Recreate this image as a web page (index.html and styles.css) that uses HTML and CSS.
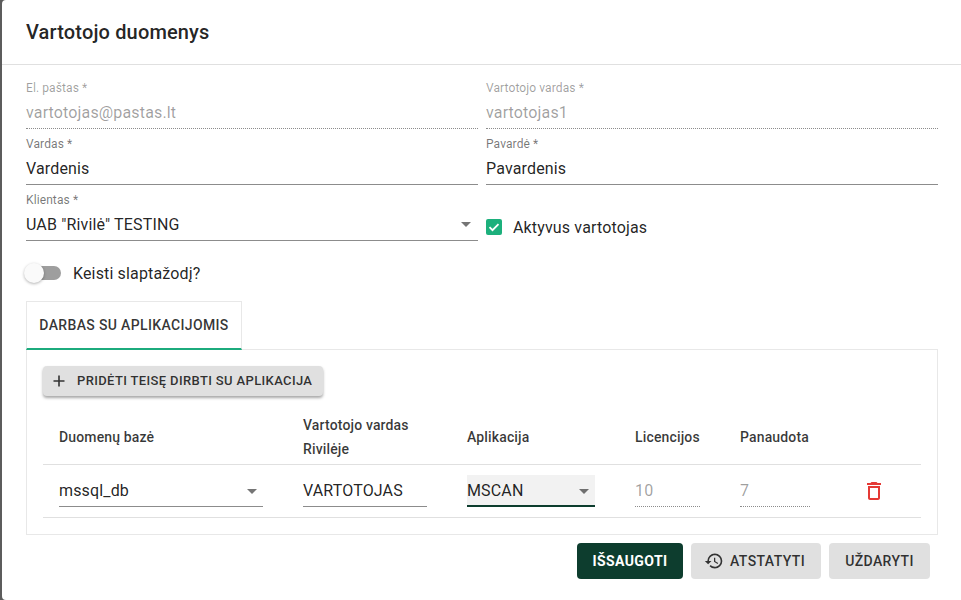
FILE: index.html
```html
<!DOCTYPE html>
<html lang="lt">
<head>
<meta charset="utf-8">
<title>Vartotojo duomenys</title>
<link rel="stylesheet" href="styles.css">
</head>
<body>
<div class="dialog">
  <header class="dialog-head"><h1>Vartotojo duomenys</h1></header>
  <div class="dialog-body">
    <div class="form-grid">
      <div class="field disabled"><label>El. paštas *</label><div class="value">vartotojas@pastas.lt</div></div>
      <div class="field disabled"><label>Vartotojo vardas *</label><div class="value">vartotojas1</div></div>
      <div class="field"><label>Vardas *</label><div class="value">Vardenis</div></div>
      <div class="field"><label>Pavardė *</label><div class="value">Pavardenis</div></div>
      <div class="field select"><label>Klientas *</label><div class="value">UAB "Rivilė" TESTING<span class="caret"></span></div></div>
      <div class="check-row">
        <svg class="checkbox" width="16" height="16" viewBox="0 0 16 16"><rect width="16" height="16" rx="2" fill="#1cb07c"/><path d="M3.500 8.200l3 3 6-6" fill="none" stroke="#fff" stroke-width="1.800"/></svg>
        <span>Aktyvus vartotojas</span>
      </div>
    </div>
    <div class="switch-row">
      <span class="switch"><span class="knob"></span></span>
      <span>Keisti slaptažodį?</span>
    </div>
    <div class="tabs"><div class="tab">DARBAS SU APLIKACIJOMIS</div></div>
    <section class="tab-panel">
      <button class="btn raised"><svg width="14" height="14" viewBox="0 0 14 14"><path d="M7 1.500v11M1.500 7h11" stroke="#333" stroke-width="1.600" fill="none"/></svg><span>PRIDĖTI TEISĘ DIRBTI SU APLIKACIJA</span></button>
      <div class="table">
        <div class="row head">
          <div class="c1">Duomenų bazė</div>
          <div class="c2">Vartotojo vardas Rivilėje</div>
          <div class="c3">Aplikacija</div>
          <div class="c4">Licencijos</div>
          <div class="c5">Panaudota</div>
          <div class="c6"></div>
        </div>
        <div class="row body">
          <div class="c1"><div class="cell-input">mssql_db<span class="caret"></span></div></div>
          <div class="c2"><div class="cell-input">VARTOTOJAS</div></div>
          <div class="c3"><div class="cell-input focus">MSCAN<span class="caret"></span></div></div>
          <div class="c4"><div class="cell-input off">10</div></div>
          <div class="c5"><div class="cell-input off">7</div></div>
          <div class="c6">
            <svg class="trash" width="24" height="24" viewBox="0 0 24 24"><path fill="#e53935" d="M15.500 4l-1-1h-5l-1 1H5v2h14V4h-3.500zM6 19c0 1.100.9 2 2 2h8c1.100 0 2-.9 2-2V7H6v12zm2-10h8v10H8V9z"/></svg>
          </div>
        </div>
      </div>
    </section>
  </div>
  <footer class="actions">
    <button class="btn primary">IŠSAUGOTI</button>
    <button class="btn flat"><svg width="20" height="20" viewBox="0 0 24 24"><path fill="#333" d="M13 3a9 9 0 0 0-9 9H1l3.890 3.890.07.140L9 12H6c0-3.870 3.130-7 7-7s7 3.130 7 7-3.130 7-7 7c-1.930 0-3.680-.79-4.940-2.060l-1.420 1.420A8.954 8.954 0 0 0 13 21a9 9 0 0 0 0-18zm-1 5v5l4.280 2.540.72-1.210-3.500-2.080V8H12z"/></svg><span>ATSTATYTI</span></button>
    <button class="btn flat">UŽDARYTI</button>
  </footer>
</div>
</body>
</html>
```

FILE: styles.css
```css
* { box-sizing: border-box; }
html, body { margin: 0; height: 100%; }
body {
  background: #5c5c5c;
  font-family: Roboto, "Liberation Sans", sans-serif;
  color: rgba(0, 0, 0, .87);
  overflow: hidden;
  padding-left: 2px;
}
.dialog {
  background: #fff;
  height: 600px;
  width: 959px;
  border-radius: 4px 0 0 4px;
  display: flex;
  flex-direction: column;
}
.dialog-head {
  height: 65px;
  padding: 0 24px;
  border-bottom: 1px solid #e0e0e0;
  display: flex;
  align-items: center;
}
.dialog-head h1 {
  margin: 0 0 1px;
  font-size: 20px;
  font-weight: 500;
  letter-spacing: .15px;
}
.dialog-body { padding: 15px 23px 0 24px; }
.form-grid {
  display: grid;
  grid-template-columns: 452px 452px;
  column-gap: 8px;
  grid-auto-rows: 56px;
}
.field {
  display: flex;
  flex-direction: column;
  height: 49px;
  border-bottom: 1px solid #8c8c8c;
}
.field label {
  font-size: 12px;
  line-height: 16px;
  letter-spacing: .1px;
  color: rgba(0, 0, 0, .54);
}
.field .value {
  position: relative;
  font-size: 16px;
  line-height: 24px;
  margin-top: 5px;
  letter-spacing: .15px;
}
.field.disabled { border-bottom: 1px dotted #8c8c8c; }
.field.disabled label { color: rgba(0, 0, 0, .38); }
.field.disabled .value { color: rgba(0, 0, 0, .38); }
.caret {
  position: absolute;
  right: 7px;
  top: 9px;
  width: 0;
  height: 0;
  border-left: 5px solid transparent;
  border-right: 5px solid transparent;
  border-top: 5px solid rgba(0, 0, 0, .54);
}
.check-row {
  display: flex;
  align-items: center;
  gap: 11px;
  height: 20px;
  margin-top: 25px;
  font-size: 16px;
  letter-spacing: .15px;
}
.switch-row {
  display: flex;
  align-items: center;
  gap: 12px;
  margin-top: 13px;
  height: 24px;
  font-size: 16px;
  letter-spacing: .15px;
}
.switch {
  position: relative;
  width: 35px;
  height: 14px;
  border-radius: 7px;
  background: #9e9e9e;
}
.knob {
  position: absolute;
  left: -2px;
  top: -3px;
  width: 20px;
  height: 20px;
  border-radius: 50%;
  background: #fafafa;
  box-shadow: 0 1px 3px rgba(0, 0, 0, .3);
}
.tabs {
  margin-top: 16px;
  height: 49px;
  border-bottom: 1px solid #e8e8e8;
}
.tab {
  width: 216px;
  height: 49px;
  border: 1px solid #e8e8e8;
  border-bottom: 2px solid #1cab7d;
  font-size: 14px;
  font-weight: 500;
  letter-spacing: .35px;
  color: rgba(0, 0, 0, .8);
  display: flex;
  align-items: center;
  justify-content: center;
}
.tab-panel {
  height: 185px;
  padding: 16px 16px 0;
  border: 1px solid #e8e8e8;
  border-top: 0;
}
.btn {
  border: 0;
  border-radius: 4px;
  font-family: inherit;
  font-weight: 500;
  display: inline-flex;
  align-items: center;
  justify-content: center;
}
.raised {
  height: 30px;
  width: 280px;
  padding: 0 0 1px 9px;
  justify-content: flex-start;
  background: #e0e0e0;
  font-size: 13px;
  letter-spacing: .36px;
  color: rgba(0, 0, 0, .8);
  gap: 11px;
  box-shadow: 0 2px 3px rgba(0, 0, 0, .35);
}
.table { margin-top: 14px; }
.row {
  display: flex;
  width: 878px;
  border-bottom: 1px solid #e0e0e0;
  font-size: 14px;
  letter-spacing: .15px;
}
.row.head {
  height: 55px;
  font-weight: 500;
  line-height: 24px;
  align-items: center;
  color: rgba(0, 0, 0, .78);
}
.row.body { height: 53px; align-items: flex-start; padding-top: 10px; }
.c1 { width: 260px; padding-left: 16px; }
.c2 { width: 164px; padding-right: 40px; }
.c3 { width: 168px; padding-right: 40px; }
.c4 { width: 105px; padding-right: 40px; }
.c5 { width: 110px; padding-right: 40px; }
.c6 { flex: 1; display: flex; justify-content: flex-start; padding: 4px 0 0 12px; }
.row.body .c1 { padding-right: 40px; }
.cell-input {
  position: relative;
  height: 32px;
  line-height: 31px;
  font-size: 16px;
  letter-spacing: .15px;
  border-bottom: 1px solid #8c8c8c;
}
.cell-input .caret { top: 14px; right: 6px; }
.cell-input.focus {
  background: #f2f2f2;
  border-bottom: 2px solid #0d3d2e;
}
.cell-input.off {
  color: rgba(0, 0, 0, .38);
  border-bottom: 1px dotted #8c8c8c;
}
.actions {
  display: flex;
  justify-content: flex-end;
  gap: 8px;
  padding: 8px 29px 0 0;
  margin-right: 2px;
}
.actions .btn {
  height: 36px;
  font-size: 14px;
  letter-spacing: .4px;
}
.primary { width: 106px; background: #0d3d2e; color: #fff; font-weight: 700; }
.flat { background: #e0e0e0; color: rgba(0, 0, 0, .8); }
.actions .flat:nth-child(2) { width: 130px; gap: 6px; justify-content: flex-start; padding-left: 13px; }
.actions .flat:nth-child(3) { width: 101px; }
```
